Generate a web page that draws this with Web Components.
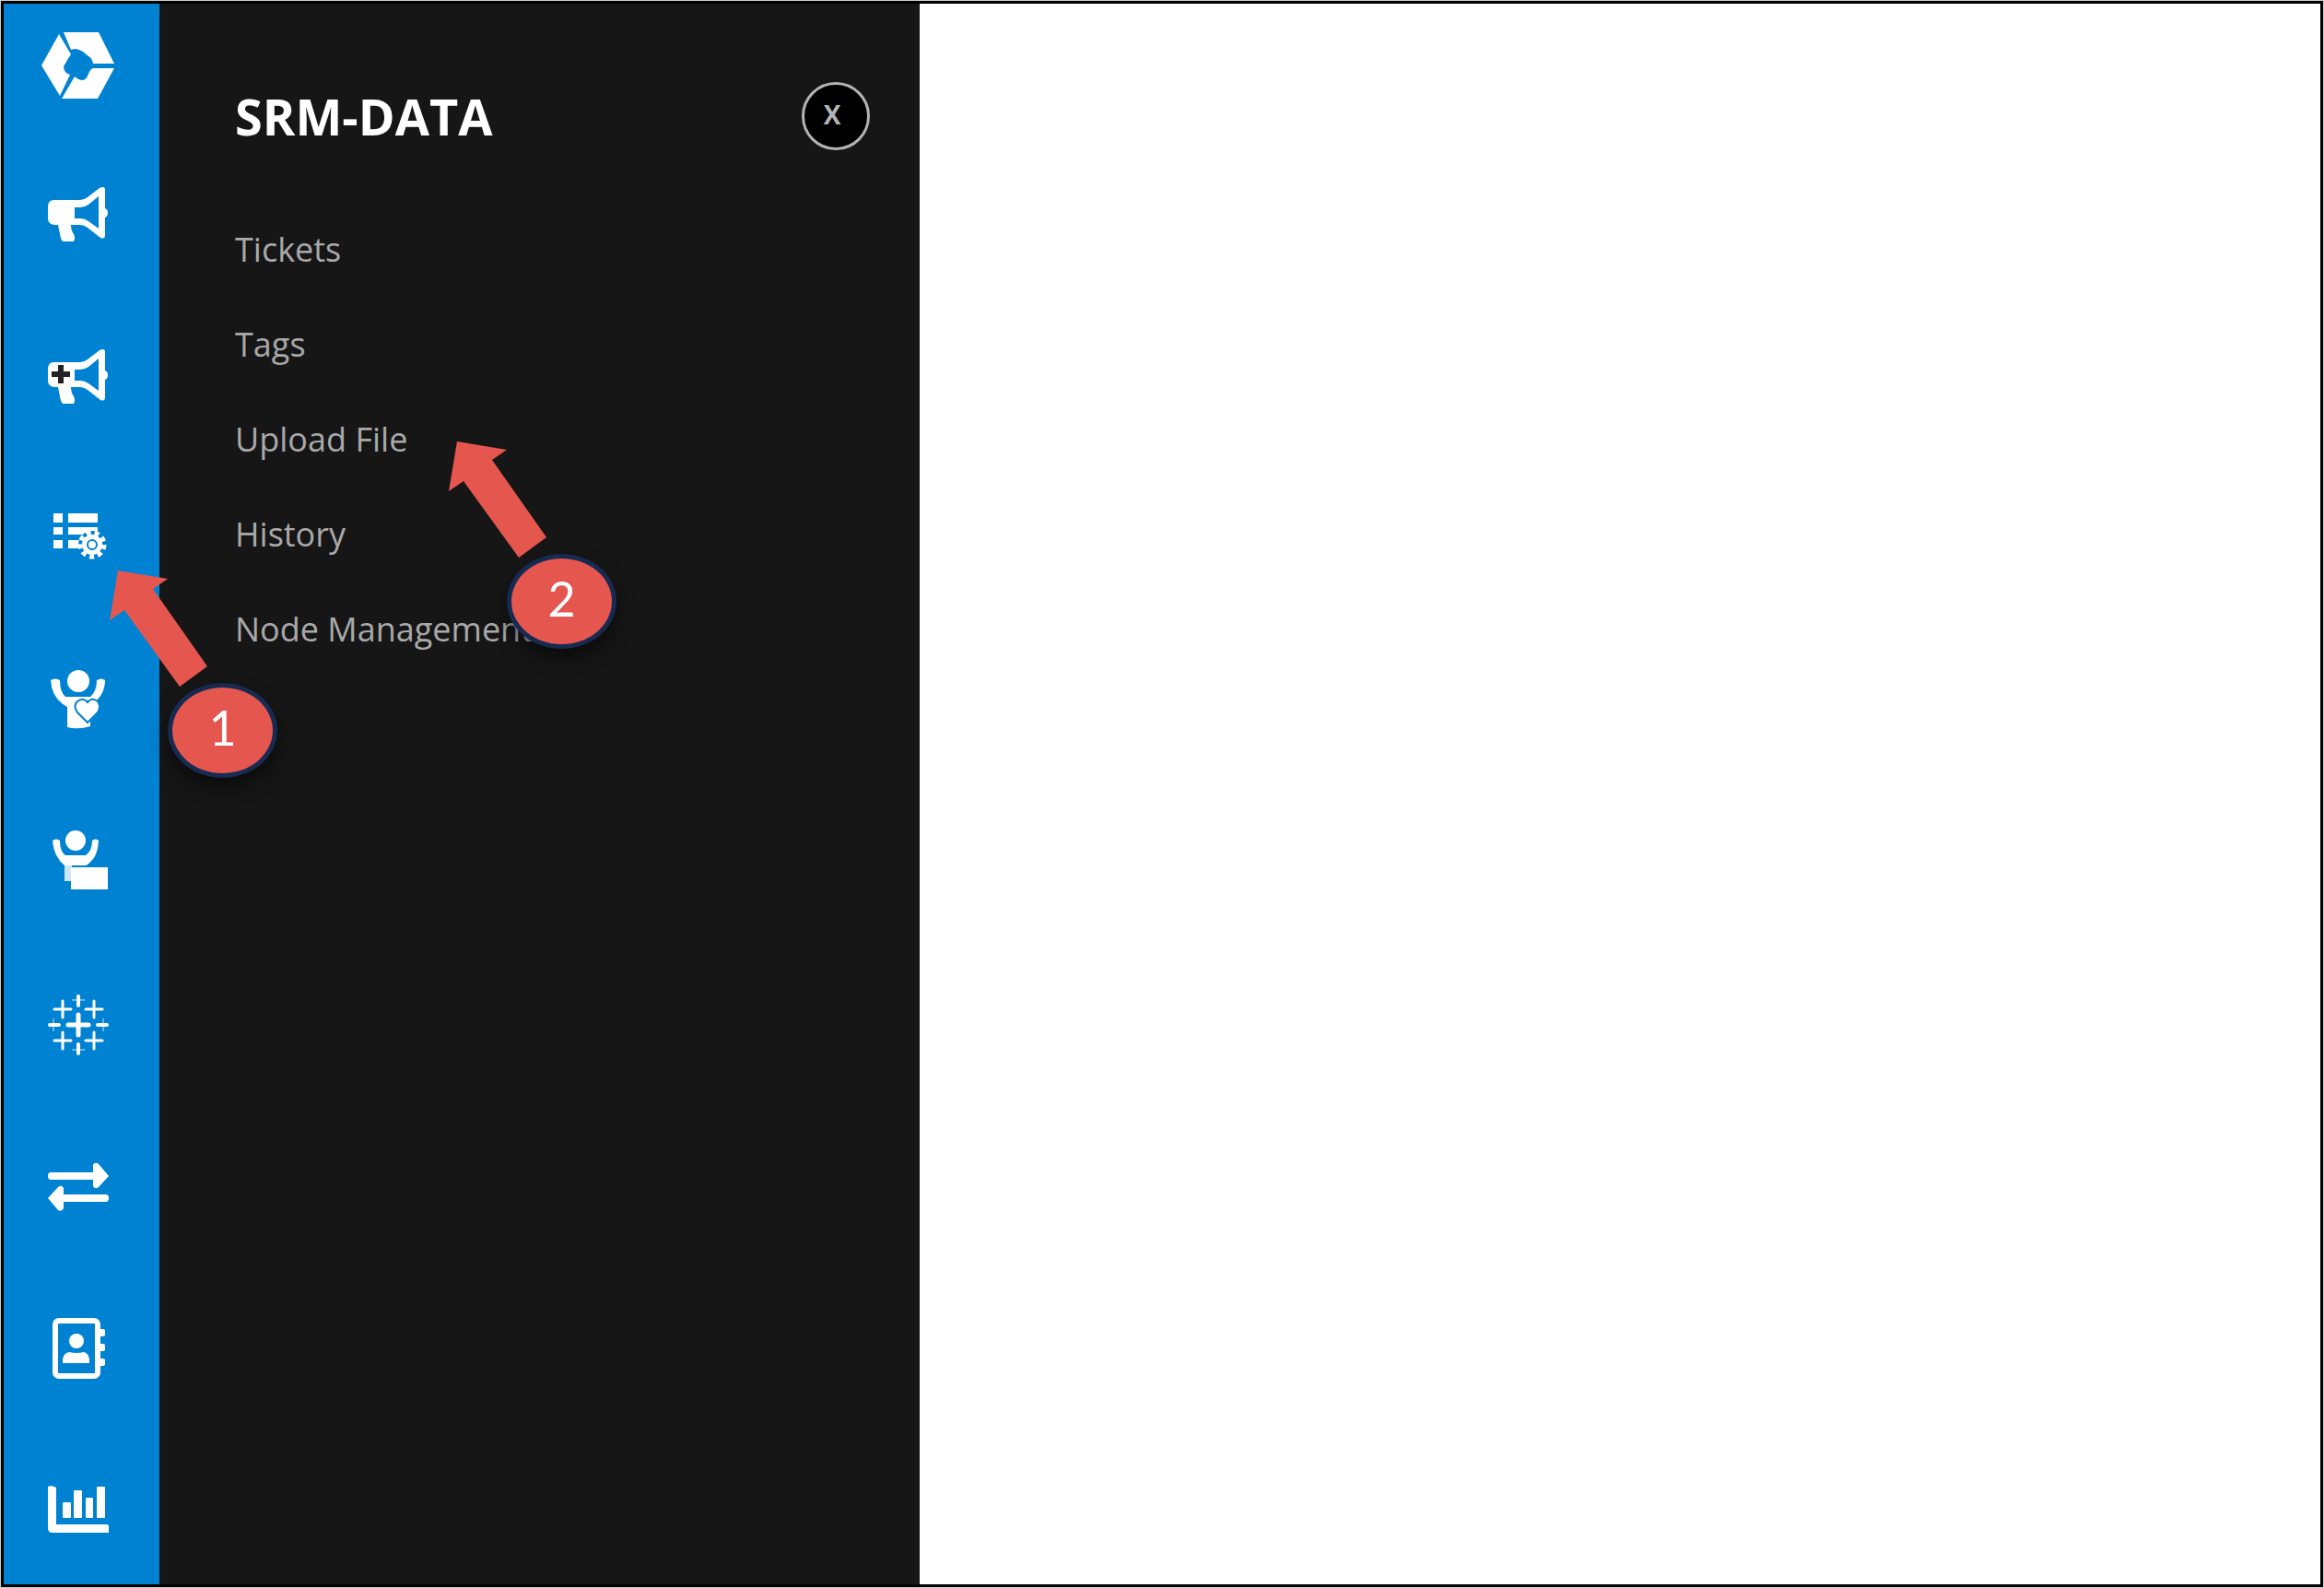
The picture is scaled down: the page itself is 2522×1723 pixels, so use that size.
<!DOCTYPE html>
<html lang="en">
<head>
<meta charset="utf-8">
<title>SRM-DATA</title>
<style>
    * { box-sizing: border-box; }
    body {
        margin: 0;
        padding: 1px;
        min-height: 100vh;
        display: flex;
        background: #c8cec9;
        font-family: "Open Sans", "Noto Sans", sans-serif;
    }
</style>
</head>
<body>

<template id="app-frame-template">
    <style>
        :host {
            position: relative;
            box-sizing: border-box;
            display: flex;
            flex: 1;
            border: 3px solid #000;
            background: #fff;
        }
        main { flex: 1; }
    </style>
    <slot name="rail"></slot>
    <slot name="panel"></slot>
    <main><slot></slot></main>
</template>

<template id="icon-rail-template">
    <style>
        :host {
            display: block;
            flex: none;
            width: 169px;
            box-sizing: border-box;
            padding-top: 23px;
            background: #0082d2;
        }
        nav {
            display: flex;
            flex-direction: column;
            align-items: center;
            gap: 88px;
            padding-right: 8px;
        }
        ::slotted(.logo) { margin-bottom: -15px; }
    </style>
    <nav aria-label="Main"><slot></slot></nav>
</template>

<template id="rail-icon-template">
    <style>
        :host { display: block; }
        a { display: block; color: #fff; }
        svg { display: block; width: 88px; height: 88px; fill: currentColor; }
        .bg { fill: #0082d2; }
        .line { fill: none; stroke: currentColor; }
    </style>
    <a href="#"></a>
</template>

<template id="side-panel-template">
    <style>
        :host {
            display: block;
            flex: none;
            width: 825px;
            box-sizing: border-box;
            padding: 85px 54px 0 82px;
            background: #161616;
        }
        header {
            display: flex;
            align-items: center;
            justify-content: space-between;
            margin-bottom: 56px;
        }
        h1 {
            margin: 0;
            font-size: 54px;
            line-height: 74px;
            font-weight: 700;
            color: #fff;
        }
        button {
            width: 74px;
            height: 74px;
            box-sizing: border-box;
            padding: 0 8px 4px 0;
            border: 3px solid #b4b4b4;
            border-radius: 50%;
            background: #000;
            color: #b4b4b4;
            font: 700 28px "Open Sans", sans-serif;
        }
    </style>
    <header>
        <h1></h1>
        <button type="button" aria-label="Close X">X</button>
    </header>
    <nav><slot></slot></nav>
</template>

<template id="panel-link-template">
    <style>
        :host { display: block; }
        a {
            font-size: 36px;
            line-height: 103px;
            font-weight: 500;
            color: #a9a9a9;
            text-decoration: none;
        }
    </style>
    <a href="#"><slot></slot></a>
</template>

<template id="step-callout-template">
    <style>
        :host {
            position: absolute;
            display: block;
            width: 183px;
        }
        svg { display: block; width: 106px; height: 126px; fill: #e5564f; }
        .badge {
            display: flex;
            align-items: center;
            justify-content: center;
            box-sizing: border-box;
            width: 119px;
            height: 103px;
            margin: -4px 0 0 63px;
            padding-bottom: 8px;
            border: 5px solid #172b51;
            border-radius: 50%;
            background: #e5564f;
            box-shadow: 0 10px 20px rgba(0, 0, 0, .5);
            color: #fff;
            font: 400 52px Lato, sans-serif;
        }
    </style>
    <svg viewBox="0 0 106 126" aria-hidden="true"><path d="M9 0 63 9 47 20 106 104 76 126 16 43 0 54Z"/></svg>
    <div class="badge"><slot></slot></div>
</template>

<app-frame>
    <icon-rail slot="rail">
        <rail-icon class="logo" name="logo" label="Home"></rail-icon>
        <rail-icon name="campaign" label="Campaigns"></rail-icon>
        <rail-icon name="campaignAdd" label="New campaign"></rail-icon>
        <rail-icon name="data" label="Data"></rail-icon>
        <rail-icon name="care" label="Care"></rail-icon>
        <rail-icon name="agent" label="Agents"></rail-icon>
        <rail-icon name="analytics" label="Analytics"></rail-icon>
        <rail-icon name="transfer" label="Transfer"></rail-icon>
        <rail-icon name="contacts" label="Contacts"></rail-icon>
        <rail-icon name="reports" label="Reports"></rail-icon>
    </icon-rail>
    <side-panel slot="panel" heading="SRM-DATA">
        <panel-link>Tickets</panel-link>
        <panel-link>Tags</panel-link>
        <panel-link>Upload File</panel-link>
        <panel-link>History</panel-link>
        <panel-link>Node Management</panel-link>
    </side-panel>
    <step-callout style="left: 115px; top: 615px">1</step-callout>
    <step-callout style="left: 483px; top: 475px">2</step-callout>
</app-frame>

<script>
    const megaphone = `<path fill-rule="evenodd" d="M17 29H46Q50 29 54 26L67 16Q73 13 73 18V38Q76 39 76 43T73 48V67Q73 72 68 70L54 59Q50 56 46 56H36Q36 62 39 66 41 70 39 74H27Q25 72 24 66L22 56H18Q11 55 11 49V35Q12 29 17 29ZM40 37V49H46Q51 49 55 52L66 60V25L55 34Q51 37 46 37Z"/>`;

    // all icons share an 88 x 88 box
    const icons = {
        logo: `<path d="M28 8H66L83 42H60Q59 36 55 34L49 29Q44 26 40 26L36 27Z"/>
            <path d="M23 10 36 32 32 38Q30 42 28 45 28 52 35 54L24 77 4 44Z"/>
            <path d="M60 47H83L65 80H26L40 56Q44 60 49 60 53 59 55 53Q57 48 60 47Z"/>`,
        campaign: megaphone,
        campaignAdd: megaphone + `<path fill="#222" d="M22 32h6v7h7v6h-7v7h-6v-7h-7v-6h7Z"/>`,
        data: `<path d="M17 17H27V27H17ZM33 17H65V27H33ZM17 32H27V40H17ZM33 32H65V40H33ZM17 46H27V55H17ZM33 46H46V55H33Z"/>
            <circle class="bg" cx="59" cy="51" r="15"/>
            <circle class="line" cx="59" cy="51" r="13" stroke-width="5" stroke-dasharray="5 4.075"/>
            <circle cx="59" cy="51" r="11"/>
            <circle cx="59" cy="51" r="5" fill="none" stroke="#0082d2" stroke-width="2"/>`,
        care: `<circle cx="44" cy="23" r="12"/>
            <path d="M14 22Q19 19 24 22 24 35 30 40H57Q64 34 64 22 69 19 73 22 73 39 57 50V72Q44 76 32 73V51Q15 42 14 22Z"/>
            <path d="M54 68 43 57Q38 50 43 45 49 40 54 46 59 40 65 45 69 51 65 57Z" stroke="#0082d2" stroke-width="2"/>
            <path class="bg" d="M56 67 66 57 68 66 58 67Z"/>`,
        agent: `<circle cx="41" cy="20" r="11"/>
            <path d="M16 20Q20 17 24 20 24 32 30 36H52Q59 31 59 20 63 17 66 20 65 34 60 40 55 46 52 47H29Q17 37 16 20Z"/>
            <path opacity=".8" d="M29 46H37V64H29Z"/>
            <rect x="36" y="49" width="40" height="24"/>`,
        analytics: `<path class="line" stroke-width="5" stroke-linecap="round" d="M44 33V55M33 44H55"/>
            <path class="line" stroke-width="3" stroke-linecap="round" d="M27 18V36M18 27H36M61 18V36M52 27H70M27 52V70M18 61H36M61 52V70M52 61H70"/>
            <path class="line" stroke-width="4" stroke-linecap="round" d="M44 13V23M44 65V75M13 44H23M65 44H75"/>
            <path class="line" stroke-width="2" opacity=".4" d="M37 17H51M37 71H51M17 37V51M71 37V51"/>`,
        transfer: `<path d="M14 28H60V20Q62 16 66 19L77 32 66 44Q62 47 60 43V36H14Q11 36 11 32T14 28Z"/>
            <path d="M74 52H28V45Q26 41 22 44L11 56 22 69Q26 71 28 67V60H74Q77 60 77 56T74 52Z"/>`,
        contacts: `<rect class="line" x="19" y="13" width="46" height="60" rx="4" stroke-width="6"/>
            <rect x="66" y="22" width="7" height="8" rx="2"/><rect x="66" y="38" width="7" height="8" rx="2"/><rect x="66" y="54" width="7" height="8" rx="2"/>
            <circle cx="42" cy="35" r="8"/><path d="M27 59V55Q28 48 34 47 42 49 50 47 55 48 56 55V59Z"/>`,
        reports: `<path d="M11 17Q15 15 20 18V58H75Q77 58 77 60V67H16Q11 67 11 62Z"/>
            <rect x="27" y="34" width="9" height="17" rx="1"/><rect x="39" y="21" width="9" height="30" rx="1"/><rect x="52" y="29" width="8" height="22" rx="1"/><rect x="64" y="17" width="9" height="34" rx="1"/>`
    };

    // attaches an open root holding a copy of "<tag>-template"
    class TemplateElement extends HTMLElement {
        constructor() {
            super();
            const tmpl = document.getElementById(this.localName + '-template');
            this.attachShadow({ mode: 'open' }).appendChild(tmpl.content.cloneNode(true));
        }
    }

    class AppFrame extends TemplateElement {}
    class IconRail extends TemplateElement {}
    class PanelLink extends TemplateElement {}
    class StepCallout extends TemplateElement {}

    class RailIcon extends TemplateElement {
        connectedCallback() {
            const link = this.shadowRoot.querySelector('a');
            link.setAttribute('aria-label', this.getAttribute('label'));
            link.innerHTML = `<svg viewBox="0 0 88 88" aria-hidden="true">${icons[this.getAttribute('name')]}</svg>`;
        }
    }

    class SidePanel extends TemplateElement {
        connectedCallback() {
            this.shadowRoot.querySelector('h1').textContent = this.getAttribute('heading');
        }
    }

    customElements.define('app-frame', AppFrame);
    customElements.define('icon-rail', IconRail);
    customElements.define('rail-icon', RailIcon);
    customElements.define('side-panel', SidePanel);
    customElements.define('panel-link', PanelLink);
    customElements.define('step-callout', StepCallout);
</script>
</body>
</html>
